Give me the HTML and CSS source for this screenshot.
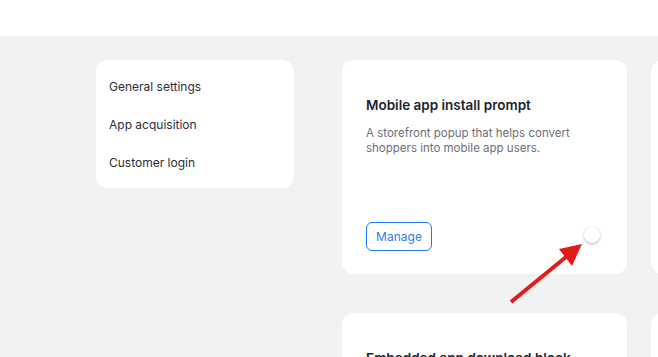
FILE: index.html
```html
<!DOCTYPE html>
<html>
<head>
  <title>App settings</title>
  <link rel="stylesheet" href="styles.css">
</head>
<body>
  <div class="topbar"></div>
  <div class="page">
    <div class="sidebar">
      <a href="#" class="side-link">General settings</a>
      <a href="#" class="side-link">App acquisition</a>
      <a href="#" class="side-link">Customer login</a>
    </div>
    <div class="cards">
      <div class="card">
        <h3 class="card-title">Mobile app install prompt</h3>
        <p class="card-text">A storefront popup that helps convert shoppers into mobile app users.</p>
        <div class="card-footer">
          <button class="manage-button">Manage</button>
          <span class="toggle-knob"></span>
        </div>
      </div>
      <div class="card"></div>
      <div class="card">
        <h3 class="card-title">Embedded app download block</h3>
      </div>
      <div class="card"></div>
    </div>
  </div>

  <!-- annotation arrow pointing at the toggle -->
  <svg class="arrow" width="658" height="357" viewBox="0 0 658 357">
    <line x1="511" y1="302" x2="566" y2="257" stroke="#e31b1b" stroke-width="4" />
    <polygon points="582,244 559,249 572,266" fill="#e31b1b" />
  </svg>
</body>
</html>
```

FILE: styles.css
```css
body {
  margin: 0;
  font-family: Inter, "DejaVu Sans", sans-serif;
  background-color: #f2f2f2;
  color: #2b2e38;
  overflow: hidden;
  height: 357px;
}

.topbar {
  height: 36px;
  background-color: #fff;
}

.page {
  display: flex;
  align-items: flex-start;
  gap: 48px;
  padding: 24px 0 0 96px;
}

.sidebar {
  background-color: #fff;
  border-radius: 12px;
  width: 198px;
  height: 128px;
  box-sizing: border-box;
  padding: 19px 13px;
  display: flex;
  flex-direction: column;
  gap: 23px;
  flex-shrink: 0;
}

.side-link {
  font-size: 12px;
  line-height: 15px;
  color: #2b2e38;
  text-decoration: none;
}

.cards {
  display: grid;
  grid-template-columns: 285px 285px;
  row-gap: 39px;
  column-gap: 24px;
  flex-shrink: 0;
}

.card {
  background-color: #fff;
  border-radius: 12px;
  height: 214px;
  box-sizing: border-box;
  padding: 37px 24px 23px 24px;
  display: flex;
  flex-direction: column;
}

.card-title {
  margin: 0;
  font-size: 13.5px;
  line-height: 17px;
  font-weight: 600;
  color: #202330;
}

.card-text {
  margin: 12px 0 0;
  font-size: 11.5px;
  line-height: 15px;
  color: #6b6f7c;
  width: 220px;
}

.card-footer {
  margin-top: auto;
  display: flex;
  align-items: center;
  justify-content: space-between;
}

.manage-button {
  font-family: Inter, "DejaVu Sans", sans-serif;
  background-color: #fff;
  color: #2f7cf6;
  border: 1px solid #1f7af5;
  border-radius: 6px;
  height: 29px;
  width: 66px;
  padding: 0;
  font-size: 12px;
  cursor: pointer;
}

.toggle-knob {
  width: 16px;
  height: 16px;
  border-radius: 50%;
  background-color: #fff;
  box-shadow: 0 1px 3px rgba(0, 0, 0, 0.3);
  margin-right: 3px;
  margin-bottom: 4px;
}

.arrow {
  position: absolute;
  left: 0;
  top: 0;
  pointer-events: none;
}
```
